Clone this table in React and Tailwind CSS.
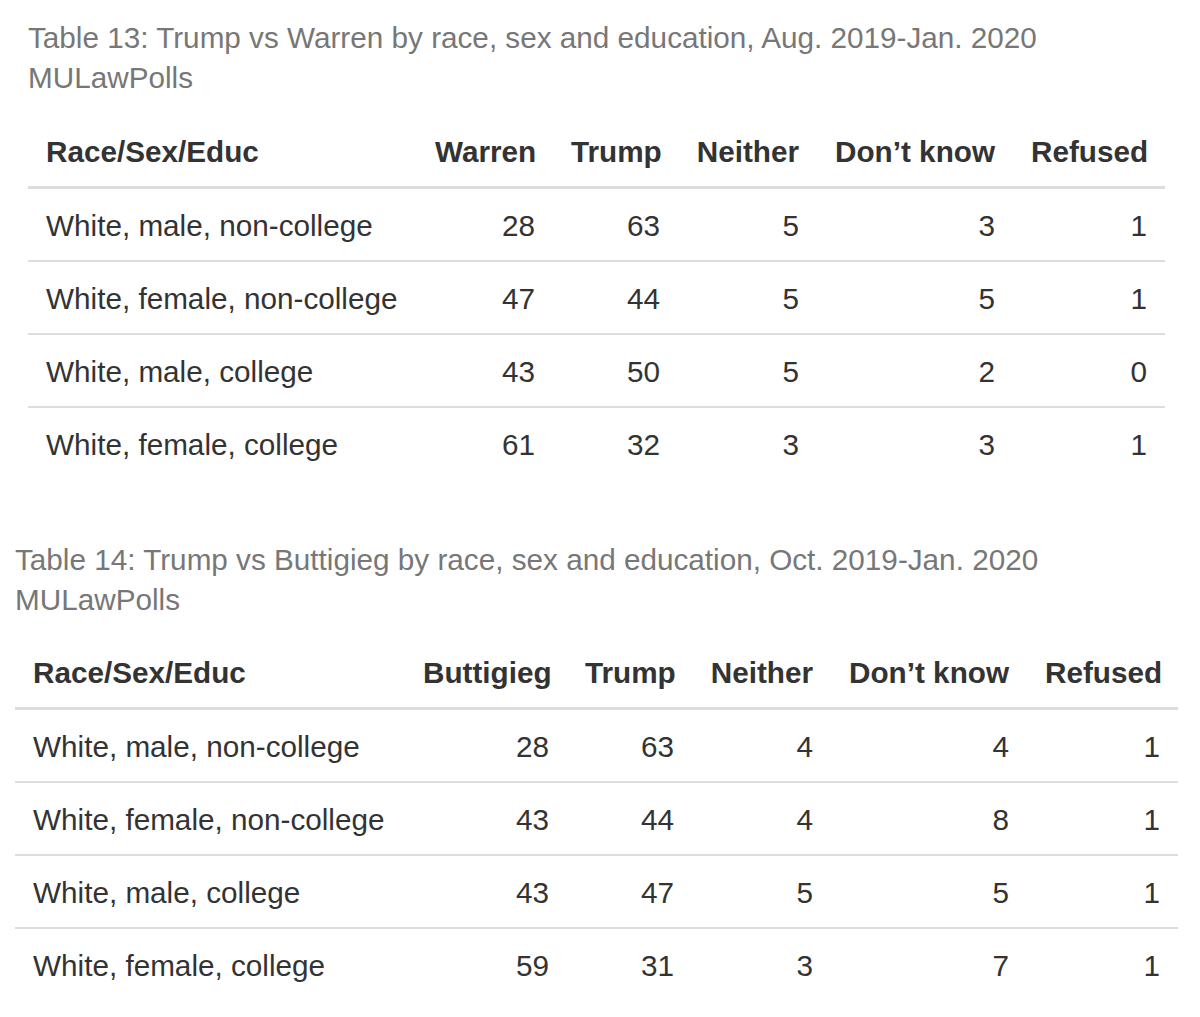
import React from 'react';

// Two poll crosstabs (MULawPolls), same layout, slightly different offsets.
const warren = {
  caption: 'Table 13: Trump vs Warren by race, sex and education, Aug. 2019-Jan. 2020',
  head: ['Race/Sex/Educ', 'Warren', 'Trump', 'Neither', 'Don’t know', 'Refused'],
  rows: [
    ['White, male, non-college', 28, 63, 5, 3, 1],
    ['White, female, non-college', 47, 44, 5, 5, 1],
    ['White, male, college', 43, 50, 5, 2, 0],
    ['White, female, college', 61, 32, 3, 3, 1],
  ],
};

const buttigieg = {
  caption: 'Table 14: Trump vs Buttigieg by race, sex and education, Oct. 2019-Jan. 2020',
  head: ['Race/Sex/Educ', 'Buttigieg', 'Trump', 'Neither', 'Don’t know', 'Refused'],
  rows: [
    ['White, male, non-college', 28, 63, 4, 4, 1],
    ['White, female, non-college', 43, 44, 4, 8, 1],
    ['White, male, college', 43, 47, 5, 5, 1],
    ['White, female, college', 59, 31, 3, 7, 1],
  ],
};

function PollTable({ data, cols, className, tableClass }) {
  return (
    <div className={className}>
      <div className="text-[29.7px] leading-[40px] text-[#777777] whitespace-nowrap">
        {data.caption}
        <br />
        MULawPolls
      </div>
      <table className={`${tableClass} w-full table-fixed border-collapse text-[29.7px] leading-[35px] text-[#333333]`}>
        <colgroup>{cols}</colgroup>
        <thead>
          <tr className="border-b-[3px] border-[#dddddd]">
            {data.head.map((h, i) => (
              <th
                key={h}
                className={`px-[18px] pt-[16px] pb-[17px] font-bold whitespace-nowrap ${i === 0 ? 'text-left' : 'text-right'}`}
              >
                {h}
              </th>
            ))}
          </tr>
        </thead>
        <tbody>
          {data.rows.map((r, ri) => (
            <tr
              key={r[0]}
              className={ri < data.rows.length - 1 ? 'border-b-2 border-[#dddddd]' : ''}
            >
              {r.map((c, i) => (
                <td
                  key={i}
                  className={`px-[18px] pt-[19px] pb-[17px] whitespace-nowrap ${i === 0 ? 'text-left' : 'text-right'}`}
                >
                  {c}
                </td>
              ))}
            </tr>
          ))}
        </tbody>
      </table>
    </div>
  );
}

export default function App() {
  return (
    <div className="min-h-[1017px] w-[1200px] bg-white pt-[18px] font-['Liberation_Sans',Arial,sans-serif]">
      <PollTable
        data={warren}
        className="ml-[28px] w-[1137px]"
        tableClass="mt-[20px]"
        cols={
          <>
            <col className="w-[389px]" />
            <col className="w-[136px]" />
            <col className="w-[125px]" />
            <col className="w-[139px]" />
            <col className="w-[196px]" />
            <col className="w-[152px]" />
          </>
        }
      />
      <PollTable
        data={buttigieg}
        className="ml-[15px] mt-[61px] w-[1163px]"
        tableClass="mt-[19px]"
        cols={
          <>
            <col className="w-[390px]" />
            <col className="w-[162px]" />
            <col className="w-[125px]" />
            <col className="w-[139px]" />
            <col className="w-[196px]" />
            <col className="w-[151px]" />
          </>
        }
      />
    </div>
  );
}
